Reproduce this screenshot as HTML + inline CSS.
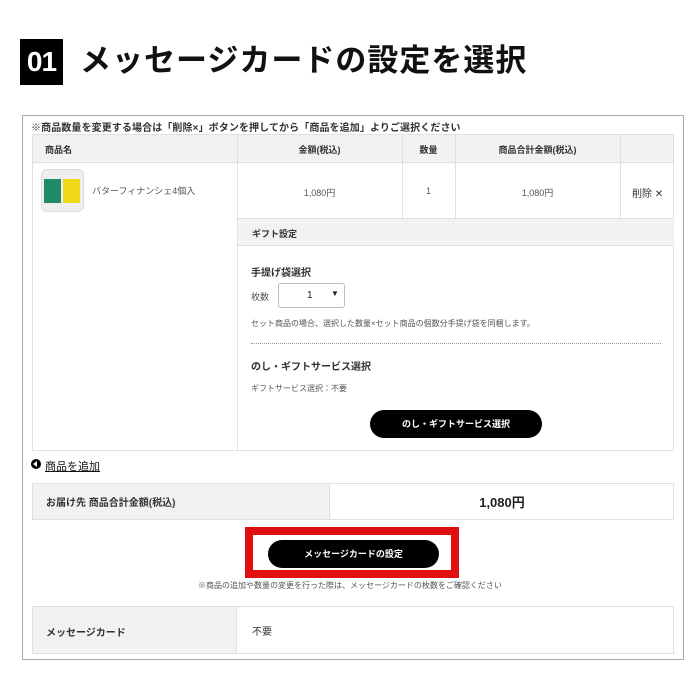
<!DOCTYPE html>
<html><head><meta charset="utf-8"><style>
*{margin:0;padding:0;box-sizing:border-box}
body{width:700px;height:684px;background:#fff;font-family:"Liberation Sans","Noto Sans CJK JP",sans-serif;color:#222;position:relative;overflow:hidden}
.a{position:absolute}
.num{left:20px;top:39px;width:43px;height:46px;background:#000;color:#fff;font-size:28px;font-weight:bold;text-align:center;line-height:46px;letter-spacing:-1px}
.title{left:80px;top:38px;font-size:31px;font-weight:bold;letter-spacing:1px;line-height:46px;color:#111;white-space:nowrap}
.outer{left:22px;top:115px;width:662px;height:545px;border:1px solid #aaa}
.g{background:#f2f2f2}
.b{border:1px solid #e0e0e0}
.t{font-size:10px;font-weight:bold;color:#333}
.s{font-size:9px;color:#555}
.btn{background:#000;color:#fff;border-radius:14px;font-size:10px;font-weight:bold;text-align:center}
</style></head><body>
<div class="a num">01</div>
<div class="a title">メッセージカードの設定を選択</div>
<div class="a outer"></div>
<div class="a t" style="left:31px;top:119px;font-size:10px;letter-spacing:0.1px">※商品数量を変更する場合は「削除×」ボタンを押してから「商品を追加」よりご選択ください</div>
<div class="a g b" style="left:32px;top:134px;width:642px;height:29px"></div>
<div class="a" style="left:237px;top:134px;width:1px;height:317px;background:#e0e0e0"></div>
<div class="a" style="left:402px;top:134px;width:1px;height:85px;background:#e0e0e0"></div>
<div class="a" style="left:455px;top:134px;width:1px;height:85px;background:#e0e0e0"></div>
<div class="a" style="left:620px;top:134px;width:1px;height:85px;background:#e0e0e0"></div>
<div class="a t" style="left:45px;top:143px;font-size:9px">商品名</div>
<div class="a t" style="left:237px;top:143px;width:165px;text-align:center;font-size:9px">金額(税込)</div>
<div class="a t" style="left:402px;top:143px;width:53px;text-align:center;font-size:9px">数量</div>
<div class="a t" style="left:455px;top:143px;width:165px;text-align:center;font-size:9px">商品合計金額(税込)</div>
<div class="a b" style="left:32px;top:162px;width:642px;height:289px;border-top:none"></div>
<div class="a" style="left:41px;top:169px;width:43px;height:43px;border-radius:6px;background:#eee;border:1px solid #ddd"></div>
<div class="a" style="left:44px;top:179px;width:17px;height:24px;background:#1e8a6a"></div>
<div class="a" style="left:63px;top:179px;width:17px;height:24px;background:#f0d818"></div>
<div class="a s" style="left:92px;top:184px">バターフィナンシェ4個入</div>
<div class="a s" style="left:237px;top:186px;width:165px;text-align:center">1,080円</div>
<div class="a s" style="left:402px;top:186px;width:53px;text-align:center">1</div>
<div class="a s" style="left:455px;top:186px;width:165px;text-align:center">1,080円</div>
<div class="a" style="left:632px;top:185px;font-size:10px;color:#333">削除 ✕</div>
<div class="a g" style="left:238px;top:218px;width:436px;height:28px;border-top:1px solid #e0e0e0;border-bottom:1px solid #e0e0e0"></div>
<div class="a t" style="left:252px;top:227px;font-size:9px">ギフト設定</div>
<div class="a t" style="left:251px;top:264px">手提げ袋選択</div>
<div class="a s" style="left:251px;top:290px">枚数</div>
<div class="a" style="left:278px;top:283px;width:67px;height:25px;border:1px solid #bbb;border-radius:3px;font-size:10px"><span style="position:absolute;left:28px;top:6px">1</span><span style="position:absolute;left:52px;top:5px;font-size:8px">▼</span></div>
<div class="a s" style="left:251px;top:318px;font-size:8px">セット商品の場合、選択した数量×セット商品の個数分手提げ袋を同梱します。</div>
<div class="a" style="left:251px;top:343px;width:410px;border-top:1px dotted #999"></div>
<div class="a t" style="left:251px;top:358px">のし・ギフトサービス選択</div>
<div class="a s" style="left:251px;top:383px;font-size:8px">ギフトサービス選択：不要</div>
<div class="a btn" style="left:370px;top:410px;width:172px;height:28px;line-height:28px;font-size:9px">のし・ギフトサービス選択</div>
<div class="a" style="left:31px;top:459px;width:10px;height:10px;border-radius:50%;background:#000"></div>
<div class="a" style="left:33px;top:461px;width:0;height:0;border-top:3px solid transparent;border-bottom:3px solid transparent;border-right:4px solid #fff"></div>
<div class="a" style="left:45px;top:458px;font-size:11px;text-decoration:underline;color:#111">商品を追加</div>
<div class="a b" style="left:32px;top:483px;width:642px;height:37px"></div>
<div class="a g" style="left:33px;top:484px;width:297px;height:35px;border-right:1px solid #e0e0e0"></div>
<div class="a t" style="left:46px;top:494px">お届け先 商品合計金額(税込)</div>
<div class="a" style="left:330px;top:492px;width:344px;text-align:center;font-size:13px;font-weight:bold">1,080円</div>
<div class="a" style="left:245px;top:527px;width:214px;height:51px;border:8px solid #e01010"></div>
<div class="a btn" style="left:268px;top:540px;width:171px;height:28px;line-height:28px;font-size:9px">メッセージカードの設定</div>
<div class="a" style="left:198px;top:580px;font-size:8px;color:#555">※商品の追加や数量の変更を行った際は、メッセージカードの枚数をご確認ください</div>
<div class="a b" style="left:32px;top:606px;width:642px;height:48px"></div>
<div class="a g" style="left:33px;top:607px;width:204px;height:46px;border-right:1px solid #e0e0e0"></div>
<div class="a t" style="left:46px;top:624px">メッセージカード</div>
<div class="a" style="left:252px;top:623px;font-size:10px;color:#333">不要</div>
</body></html>
